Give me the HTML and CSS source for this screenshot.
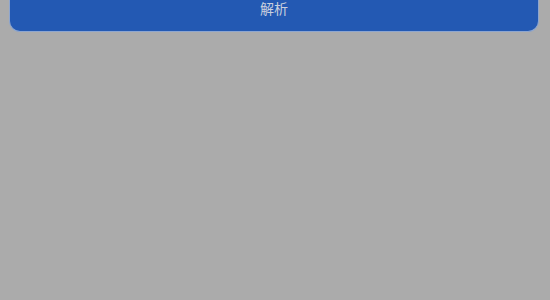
FILE: index.html
```html
<!DOCTYPE html>
<html lang="zh">
<head>
<meta charset="utf-8">
<title>解析</title>
<link rel="stylesheet" href="styles.css">
</head>
<body>
<div class="page">
  <button class="parse-btn"><span class="label">解析</span></button>
</div>
</body>
</html>
```
FILE: styles.css
```css
html, body {
  margin: 0;
  padding: 0;
  background: #ababab;
  width: 550px;
  height: 300px;
  overflow: hidden;
}
.page {
  display: flex;
  flex-direction: column;
  padding: 0 11px 0 9px;
}
.parse-btn {
  height: 32px;
  border: 1px solid #8ea6cf;
  border-top: none;
  border-radius: 0 0 11px 11px;
  background: #2359b3;
  display: flex;
  justify-content: center;
  align-items: flex-start;
  padding: 1px 0 0 0;
  font-family: "Noto Sans CJK SC", "Noto Sans", sans-serif;
  font-size: 14px;
  line-height: 15px;
  color: #c9d0de;
}
.label {
  display: block;
}
```
